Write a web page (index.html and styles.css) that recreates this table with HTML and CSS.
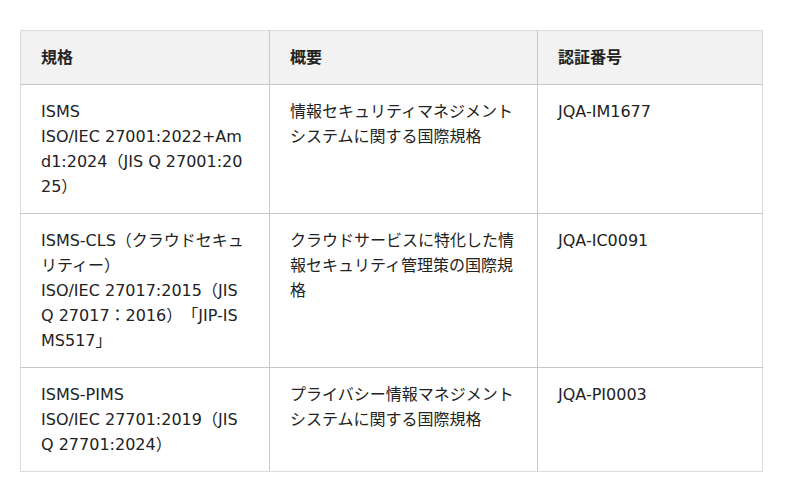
FILE: index.html
```html
<!DOCTYPE html>
<html>
<head>
<meta charset="utf-8">
<link rel="stylesheet" href="styles.css">
</head>
<body>
<table class="cert-table">
  <colgroup>
    <col class="c1">
    <col class="c2">
    <col class="c3">
  </colgroup>
  <thead>
    <tr><th>規格</th><th>概要</th><th>認証番号</th></tr>
  </thead>
  <tbody>
    <tr>
      <td>ISMS<br>ISO/IEC 27001:2022+Amd1:2024（JIS Q 27001:2025）</td>
      <td>情報セキュリティマネジメントシステムに関する国際規格</td>
      <td>JQA-IM1677</td>
    </tr>
    <tr>
      <td>ISMS-CLS（クラウドセキュリティー）<br>ISO/IEC 27017:2015（JIS Q 27017：2016）「JIP-ISMS517」</td>
      <td>クラウドサービスに特化した情報セキュリティ管理策の国際規格</td>
      <td>JQA-IC0091</td>
    </tr>
    <tr>
      <td>ISMS-PIMS<br>ISO/IEC 27701:2019（JIS Q 27701:2024）</td>
      <td>プライバシー情報マネジメントシステムに関する国際規格</td>
      <td>JQA-PI0003</td>
    </tr>
  </tbody>
</table>
</body>
</html>
```

FILE: styles.css
```css
html, body {
  margin: 0;
  padding: 0;
  background: #fff;
}
body {
  padding: 30px 20px;
  font-family: "DejaVu Sans", "Noto Sans CJK JP", sans-serif;
  font-size: 16px;
  color: #222;
  text-spacing-trim: space-all;
}
.cert-table {
  width: 742px;
  border-collapse: collapse;
  table-layout: fixed;
}
.c1 { width: 249px; }
.c2 { width: 268px; }
.c3 { width: 225px; }
.cert-table th,
.cert-table td {
  border: 1px solid #c8c8c8;
  padding: 14px 20px;
  line-height: 25px;
  text-align: left;
  vertical-align: top;
  word-break: break-all;
}
.cert-table th {
  background: #f2f2f2;
  font-weight: bold;
}
.cert-table tr:first-child th { border-top-color: #dcdcdc; }
.cert-table tr > :first-child { border-left-color: #dcdcdc; }
.cert-table tr > :last-child { border-right-color: #dcdcdc; }
.cert-table tbody tr:last-child td { border-bottom-color: #dcdcdc; }
```
